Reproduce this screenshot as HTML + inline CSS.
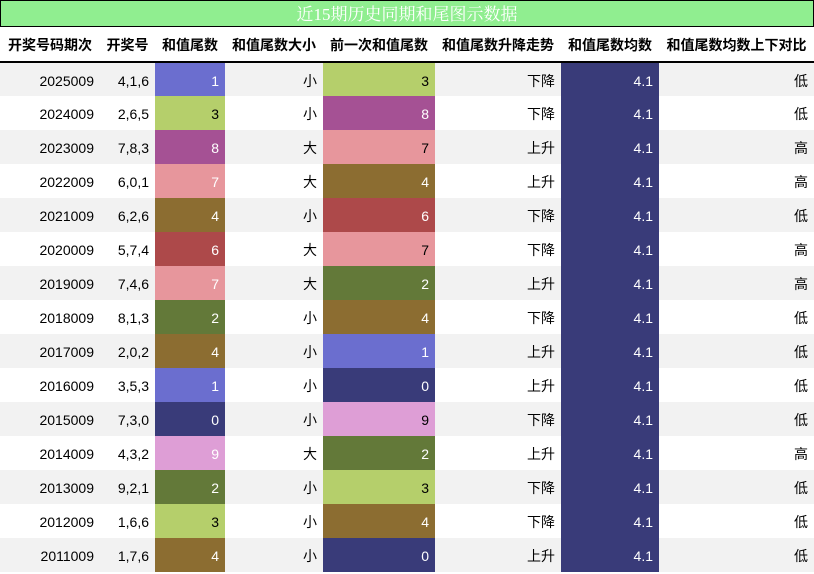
<!DOCTYPE html>
<html><head><meta charset="utf-8"><style>
body{margin:0;width:814px;height:574px;overflow:hidden;background:#fff;font-family:"Liberation Sans","Noto Sans CJK SC",sans-serif;}
.t{position:absolute;left:0;top:0;width:812px;height:25px;background:#90ee90;border:1px solid #000;color:#fff;font-family:"Liberation Serif","Noto Serif CJK SC",serif;font-size:17px;text-align:center;line-height:27px;}
table{position:absolute;left:0;top:27px;border-collapse:collapse;table-layout:fixed;width:814px;font-size:14px;}
th{height:34px;padding:1px 0 0 0;font-weight:bold;text-align:center;border-bottom:2px solid #000;color:#000;box-sizing:border-box;}
td{height:34px;padding:2px 6px 0 0;text-align:right;color:#000;box-sizing:border-box;}
tr:nth-child(odd) td{background:#f2f2f2}
tr td.c0{background:#393b79;color:#fff}tr td.c1{background:#6b6ecf;color:#fff}tr td.c2{background:#637939;color:#fff}
tr td.c3{background:#b5cf6b}tr td.c4{background:#8c6d31;color:#fff}tr td.c6{background:#ad494a;color:#fff}
tr td.c7{background:#e7969c;color:#fff}tr td.c8{background:#a55194;color:#fff}tr td.c9{background:#de9ed6;color:#fff}
tr td.k{color:#000}
tr td.a{background:#393b79;color:#fff}
</style></head><body>
<div class="t">近15期历史同期和尾图示数据</div>
<table>
<colgroup><col style="width:100px"><col style="width:55px"><col style="width:70px"><col style="width:98px"><col style="width:112px"><col style="width:126px"><col style="width:98px"><col style="width:155px"></colgroup>
<thead><tr><th style="height:35px">开奖号码期次</th><th>开奖号</th><th>和值尾数</th><th>和值尾数大小</th><th>前一次和值尾数</th><th>和值尾数升降走势</th><th>和值尾数均数</th><th>和值尾数均数上下对比</th></tr></thead>
<tbody>
<tr><td>2025009</td><td>4,1,6</td><td class="c1">1</td><td>小</td><td class="c3">3</td><td>下降</td><td class="a">4.1</td><td>低</td></tr>
<tr><td>2024009</td><td>2,6,5</td><td class="c3">3</td><td>小</td><td class="c8">8</td><td>下降</td><td class="a">4.1</td><td>低</td></tr>
<tr><td>2023009</td><td>7,8,3</td><td class="c8">8</td><td>大</td><td class="c7 k">7</td><td>上升</td><td class="a">4.1</td><td>高</td></tr>
<tr><td>2022009</td><td>6,0,1</td><td class="c7">7</td><td>大</td><td class="c4">4</td><td>上升</td><td class="a">4.1</td><td>高</td></tr>
<tr><td>2021009</td><td>6,2,6</td><td class="c4">4</td><td>小</td><td class="c6">6</td><td>下降</td><td class="a">4.1</td><td>低</td></tr>
<tr><td>2020009</td><td>5,7,4</td><td class="c6">6</td><td>大</td><td class="c7 k">7</td><td>下降</td><td class="a">4.1</td><td>高</td></tr>
<tr><td>2019009</td><td>7,4,6</td><td class="c7">7</td><td>大</td><td class="c2">2</td><td>上升</td><td class="a">4.1</td><td>高</td></tr>
<tr><td>2018009</td><td>8,1,3</td><td class="c2">2</td><td>小</td><td class="c4">4</td><td>下降</td><td class="a">4.1</td><td>低</td></tr>
<tr><td>2017009</td><td>2,0,2</td><td class="c4">4</td><td>小</td><td class="c1">1</td><td>上升</td><td class="a">4.1</td><td>低</td></tr>
<tr><td>2016009</td><td>3,5,3</td><td class="c1">1</td><td>小</td><td class="c0">0</td><td>上升</td><td class="a">4.1</td><td>低</td></tr>
<tr><td>2015009</td><td>7,3,0</td><td class="c0">0</td><td>小</td><td class="c9 k">9</td><td>下降</td><td class="a">4.1</td><td>低</td></tr>
<tr><td>2014009</td><td>4,3,2</td><td class="c9">9</td><td>大</td><td class="c2">2</td><td>上升</td><td class="a">4.1</td><td>高</td></tr>
<tr><td>2013009</td><td>9,2,1</td><td class="c2">2</td><td>小</td><td class="c3">3</td><td>下降</td><td class="a">4.1</td><td>低</td></tr>
<tr><td>2012009</td><td>1,6,6</td><td class="c3">3</td><td>小</td><td class="c4">4</td><td>下降</td><td class="a">4.1</td><td>低</td></tr>
<tr><td>2011009</td><td>1,7,6</td><td class="c4">4</td><td>小</td><td class="c0">0</td><td>上升</td><td class="a">4.1</td><td>低</td></tr>
</tbody></table>
</body></html>
